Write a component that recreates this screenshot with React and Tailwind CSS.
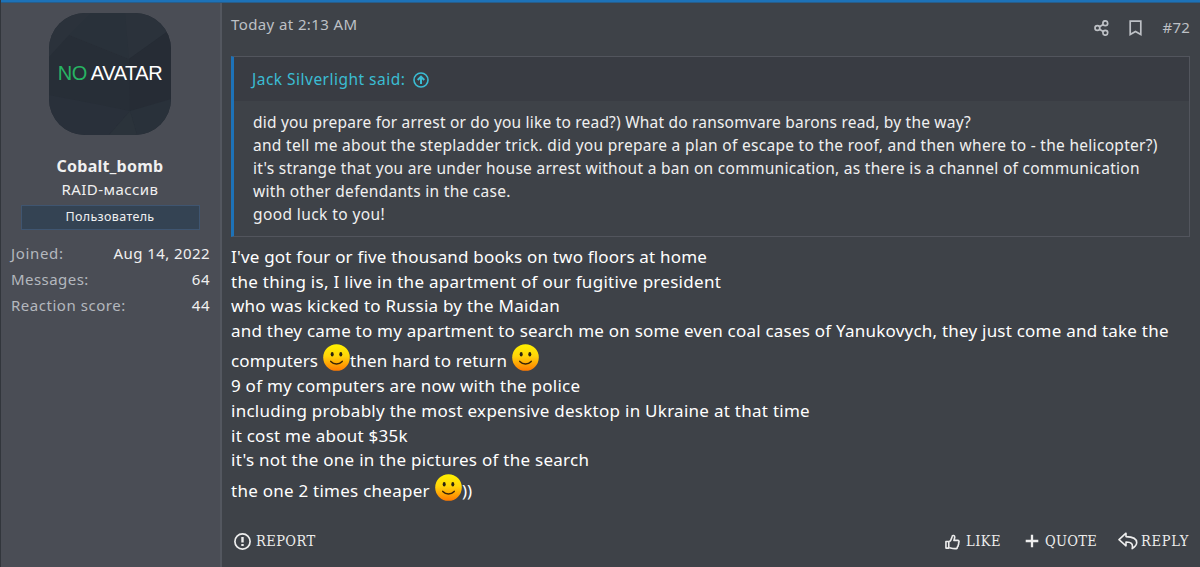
import React from "react";

const user = [
  ["Joined:", "Aug 14, 2022", "tracking-[0.65px]", "tracking-[0.43px]"],
  ["Messages:", "64", "tracking-[0.45px]", "tracking-[0.5px]"],
  ["Reaction score:", "44", "tracking-[0.53px]", "tracking-[0.5px]"],
];

const quote = [
  ["did you prepare for arrest or do you like to read?) What do ransomvare barons read, by the way?", "tracking-[0.2px]"],
  ["and tell me about the stepladder trick. did you prepare a plan of escape to the roof, and then where to - the helicopter?)", "tracking-[0.3px]"],
  ["it's strange that you are under house arrest without a ban on communication, as there is a channel of communication", "tracking-[0.285px]"],
  ["with other defendants in the case.", "tracking-[0.29px]"],
  ["good luck to you!", "tracking-[0.4px]"],
];

function Smile({ id }) {
  return (
    <svg className="mb-[3px] h-[27px] w-[27px] shrink-0" viewBox="0 0 27 27">
      <defs>
        <linearGradient id={id} x1="0" y1="0" x2="0" y2="1">
          <stop offset="0" stopColor="#fff200" />
          <stop offset="0.45" stopColor="#ffd40a" />
          <stop offset="1" stopColor="#ff7a00" />
        </linearGradient>
      </defs>
      <circle cx="13.5" cy="13.5" r="13.3" fill={`url(#${id})`} />
      <ellipse cx="9.2" cy="10.3" rx="1.5" ry="2.3" fill="#2b2410" />
      <ellipse cx="17.8" cy="10.3" rx="1.5" ry="2.3" fill="#2b2410" />
      <path d="M7.8 17.4c3.2 3.4 8.2 3.4 11.4 0" fill="none" stroke="#3a2508" strokeWidth="1.5" strokeLinecap="round" />
    </svg>
  );
}

function Line({ children, t }) {
  return <p className={`h-[24.7px] ${t}`}>{children}</p>;
}

function Avatar() {
  return (
    <div className="relative flex h-[122px] w-[122px] items-center justify-center overflow-hidden rounded-[36px] bg-[#272e37]">
      <svg className="absolute inset-0" width="122" height="122" viewBox="0 0 122 122">
        <path d="M0 44L20 22L80 46L122 16V0H0Z" fill="#2b323b" />
        <path d="M20 22L42 0H76L80 46Z" fill="#29313a" />
        <path d="M80 46L122 16V88L81 98Z" fill="#262c35" />
        <path d="M0 82L52 92L81 98L60 122H0Z" fill="#29303a" />
        <path d="M81 98L122 86V122H88Z" fill="#29313a" />
        <path d="M81 98L60 122H88Z" fill="#2b333b" />
      </svg>
      <span className="relative -mt-[2px] whitespace-nowrap font-['Liberation_Sans',sans-serif] text-[20px] leading-none tracking-[-0.45px] text-white">
        <span className="text-[#27b463]">NO</span> AVATAR
      </span>
    </div>
  );
}

export default function App() {
  return (
    <div className="flex h-[567px] w-[1200px] flex-col overflow-hidden whitespace-nowrap border-l border-[#32363c] bg-[#3e4248] font-['Noto_Sans',sans-serif] text-[#f0f0f0]">
      <div className="h-[3px] shrink-0 border-b border-[#285d89] bg-[#1d72b8]" />
      <div className="flex flex-1">
        <aside className="flex w-[221px] shrink-0 flex-col items-center border-r-2 border-[#53575f] bg-[#4a4d55] pt-[10px] pr-px">
          <Avatar />
          <h2 className="mt-[19px] h-[24px] text-[16px] leading-[24px] font-bold tracking-[0.25px]">Cobalt_bomb</h2>
          <p className="h-[22px] text-[15px] leading-[22px] tracking-[0.45px]">RAID-массив</p>
          <div className="mt-[5px] flex h-[25px] w-[179px] items-center justify-center border border-[#3f5570] bg-[#344353] text-[12.5px] tracking-[0.35px]">Пользователь</div>
          <dl className="mt-[11px] w-full pr-[9px] pl-[10px] text-[15px] leading-[25.8px]">
            {user.map(([k, v, a, b]) => (
              <div key={k} className="flex h-[25.8px] justify-between">
                <dt className={`text-[#b4b8be] ${a}`}>{k}</dt>
                <dd className={b}>{v}</dd>
              </div>
            ))}
          </dl>
        </aside>
        <main className="flex flex-1 flex-col pr-[10px] pl-[9px]">
          <header className="flex h-[53px] justify-between text-[15px] text-[#bdc0c5]">
            <time className="mt-[10px] leading-[22px] tracking-[0.4px]">Today at 2:13 AM</time>
            <div className="mt-[13px] flex h-[22px] items-center">
              <svg className="mt-[2px] mr-[20px] h-[16px] w-[15px]" viewBox="0 0 15 16" fill="none" stroke="currentColor" strokeWidth="1.7">
                <circle cx="11.3" cy="3.2" r="2.4" /><circle cx="3.4" cy="8" r="2.4" /><circle cx="11.3" cy="12.8" r="2.4" /><path d="M5.5 6.8l3.7-2.3M5.5 9.2l3.7 2.3" />
              </svg>
              <svg className="mt-[2px] mr-[21px] h-[16px] w-[13px]" viewBox="0 0 13 16" fill="none" stroke="currentColor" strokeWidth="1.7"><path d="M1.2 1.2h10.6v13.3l-5.3-3.1-5.3 3.1Z" /></svg>
              <span className="tracking-[0.2px]">#72</span>
            </div>
          </header>
          <blockquote className="flex h-[181px] w-[959px] flex-col border border-l-[3px] border-[#52555d] border-l-[#1d72b8]">
            <div className="flex h-[44px] shrink-0 items-center bg-[#393c43] pt-[1px] pl-[18px] text-[15.5px] text-[#3bbcd3]">
              <span className="tracking-[0.48px]">Jack Silverlight said:</span>
              <svg className="ml-[8px] h-[16px] w-[16px]" viewBox="0 0 16 16" fill="none" stroke="currentColor" strokeWidth="1.6">
                <circle cx="8" cy="8" r="7" /><path d="M8 12V4.7M4.7 8L8 4.7L11.3 8" strokeWidth="2" />
              </svg>
            </div>
            <div className="pt-[10px] pl-[19px] text-[15.5px] leading-[22.9px]">
              {quote.map(([text, t]) => <p key={text} className={t}>{text}</p>)}
            </div>
          </blockquote>
          <div className="mt-[8px] text-[17px] leading-[24.7px] text-white">
            <Line t="tracking-[0.18px]">I've got four or five thousand books on two floors at home</Line>
            <Line t="tracking-[0.28px]">the thing is, I live in the apartment of our fugitive president</Line>
            <Line t="tracking-[0.25px]">who was kicked to Russia by the Maidan</Line>
            <Line t="tracking-[0.22px]">and they came to my apartment to search me on some even coal cases of Yanukovych, they just come and take the</Line>
            <div className="flex h-[30.5px] items-end">
              <span className="mb-px w-[92px] tracking-[0.1px]">computers</span><Smile id="s1" /><span className="mb-px w-[162px] tracking-[0.16px]">then hard to return</span><Smile id="s2" />
            </div>
            <Line t="tracking-[0.24px]">9 of my computers are now with the police</Line>
            <Line t="tracking-[0.27px]">including probably the most expensive desktop in Ukraine at that time</Line>
            <Line t="tracking-[0.25px]">it cost me about $35k</Line>
            <Line t="tracking-[0.27px]">it's not the one in the pictures of the search</Line>
            <div className="flex h-[30.5px] items-end">
              <span className="w-[204px] tracking-[0.25px]">the one 2 times cheaper</span><Smile id="s3" /><span>))</span>
            </div>
          </div>
          <footer className="mt-[26px] flex h-[24px] items-center justify-between font-['DejaVu_Serif_Condensed','DejaVu_Serif',serif] text-[14.5px] text-[#ededed]">
            <div className="flex items-center gap-[5px] pl-[3px]">
              <svg className="h-[17px] w-[17px]" viewBox="0 0 17 17" fill="none" stroke="currentColor" strokeWidth="1.7"><circle cx="8.5" cy="8.5" r="7.6" /><path d="M8.5 4v5.5M8.5 11v2" strokeWidth="2.4" /></svg>
              <span className="tracking-[0.4px]">REPORT</span>
            </div>
            <div className="flex items-center">
              <svg className="mr-[6px] h-[16px] w-[15px]" viewBox="0 0 16 17" fill="none" stroke="currentColor" strokeWidth="1.7" strokeLinejoin="round"><path d="M1 8h3v7H1Z" /><path d="M4.5 8.2C7 6.5 7 4.5 7.6 2.5C7.8 1 10.8 1 10.3 4L9.5 6.8h4.2c1.7.2 1.5 2.2.7 2.6c.5 1 .3 1.6-.4 2.3c.3 1-.1 1.6-.8 2c0 1.4-1 1.9-2.1 1.9c-3.2.1-4.4-.6-6.6-1.2" /></svg>
              <span className="w-[59px] tracking-[0.5px]">LIKE</span>
              <svg className="mr-[6px] -mt-[2px] h-[14px] w-[14px]" viewBox="0 0 14 14"><path d="M7 .7v12.6M.7 7h12.6" stroke="currentColor" strokeWidth="2.3" /></svg>
              <span className="w-[73px] tracking-[0.3px]">QUOTE</span>
              <svg className="mr-[3px] -mt-[2px] h-[18px] w-[20px]" viewBox="0 0 20 18" fill="none" stroke="currentColor" strokeWidth="1.6" strokeLinejoin="round"><path d="M8 1.2L1 7.6l7 6.2V10c5-.1 7.3 1.4 6.2 6.6c3-1.8 4.5-3.5 4.5-6c0-3.9-4.2-5.9-10.7-6Z" /></svg>
              <span className="w-[49px] tracking-[0.7px]">REPLY</span>
            </div>
          </footer>
        </main>
      </div>
    </div>
  );
}
